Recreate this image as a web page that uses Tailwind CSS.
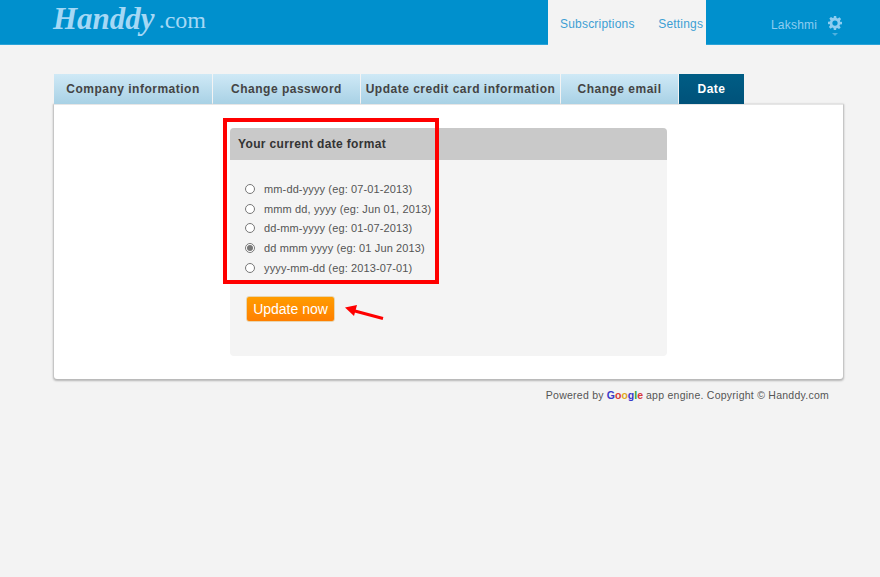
<!DOCTYPE html>
<html lang="en">
<head>
  <meta charset="UTF-8" />
  <title>Handdy - Date format</title>
  <script src="https://cdn.jsdelivr.net/npm/@tailwindcss/browser@4"></script>
</head>
<body class="h-[577px] w-[880px] overflow-hidden bg-[#f3f3f3] font-['Liberation_Sans',Arial,sans-serif] text-[#444]">

  <!-- top bar -->
  <header class="flex h-[45px] border-b border-[#2ba3d8] bg-[#0090cd]">
    <div class="ml-[53px] flex h-[44px] w-[495px] items-start pt-[1px] text-[#a5d8f5]">
      <span class="font-['Liberation_Serif',serif] text-[31px] leading-[36px] font-bold italic">Handdy</span>
      <span class="ml-[4px] font-['Liberation_Serif',serif] text-[24px] leading-[38px]">.com</span>
    </div>
    <div class="-mb-px w-[158px] bg-[#f3f3f3] pt-[17px] text-[12px] leading-[14px] tracking-[0.2px] text-[#3d9fd4]">
      <a class="ml-[12px]">Subscriptions</a>
      <a class="ml-[20px]">Settings</a>
    </div>
    <div class="relative flex-1 pt-[18px] text-[12px] leading-[14px] tracking-[0.2px] text-[#8fcdf0]">
      <span class="ml-[65px]">Lakshmi</span>
      <svg class="absolute top-[16px] left-[122px]" width="14" height="14" viewBox="0 0 24 24" fill="#8fcdf0">
        <path fill-rule="evenodd" d="M10 0h4l.6 3.4 2.1.9 2.9-2 2.8 2.8-2 2.9.9 2.1L24 10v4l-3.4.6-.9 2.1 2 2.9-2.8 2.8-2.9-2-2.1.9L14 24h-4l-.6-3.4-2.1-.9-2.9 2-2.8-2.8 2-2.9-.9-2.1L0 14v-4l3.4-.6.9-2.1-2-2.9 2.8-2.8 2.9 2 2.1-.9zM12 7.500a4.500 4.500 0 1 0 0 9 4.500 4.500 0 0 0 0-9z" />
      </svg>
      <svg class="absolute top-[33px] left-[126px]" width="6" height="3" viewBox="0 0 6 3" fill="#4fb0de"><path d="M0 0h6L3 3z" /></svg>
    </div>
  </header>

  <main class="relative ml-[54px] mt-[29px] w-[789px]">
    <!-- tabs -->
    <nav class="flex h-[30px] gap-px text-[12px] leading-[30px] font-bold tracking-[0.5px] text-[#444]">
      <a class="w-[158px] bg-gradient-to-b from-[#cfe9f6] to-[#a8d1e5] text-center">Company information</a>
      <a class="w-[147px] bg-gradient-to-b from-[#cfe9f6] to-[#a8d1e5] text-center">Change password</a>
      <a class="w-[199px] bg-gradient-to-b from-[#cfe9f6] to-[#a8d1e5] text-center">Update credit card information</a>
      <a class="w-[117px] bg-gradient-to-b from-[#cfe9f6] to-[#a8d1e5] text-center">Change email</a>
      <a class="w-[65px] bg-gradient-to-b from-[#005d85] to-[#00527a] text-center text-white">Date</a>
    </nav>

    <!-- card -->
    <section class="h-[275px] rounded-b-[3px] border-t border-[#e6e6e6] bg-white pt-[23px] pl-[176px] shadow-[0_1px_2px_1px_rgba(0,0,0,0.25)]">
      <div class="h-[228px] w-[437px] rounded-[4px] bg-[#f4f4f4]">
        <h2 class="h-[32px] rounded-t-[4px] bg-[#c9c9c9] pl-[8px] text-[12px] leading-[33px] font-bold tracking-[0.35px] text-[#333]">Your current date format</h2>
        <div class="flex flex-col gap-[5.7px] pt-[22px] pl-[15px] text-[11px] leading-[14px] tracking-[0.13px] text-[#555]">
          <label class="flex items-center"><input type="radio" name="fmt" class="mr-[9px] h-[10px] w-[10px] accent-[#777]" />mm-dd-yyyy (eg: 07-01-2013)</label>
          <label class="flex items-center"><input type="radio" name="fmt" class="mr-[9px] h-[10px] w-[10px] accent-[#777]" />mmm dd, yyyy (eg: Jun 01, 2013)</label>
          <label class="flex items-center"><input type="radio" name="fmt" class="mr-[9px] h-[10px] w-[10px] accent-[#777]" />dd-mm-yyyy (eg: 01-07-2013)</label>
          <label class="flex items-center"><input type="radio" name="fmt" checked class="mr-[9px] h-[10px] w-[10px] accent-[#777]" />dd mmm yyyy (eg: 01 Jun 2013)</label>
          <label class="flex items-center"><input type="radio" name="fmt" class="mr-[9px] h-[10px] w-[10px] accent-[#777]" />yyyy-mm-dd (eg: 2013-07-01)</label>
        </div>
        <button class="mt-[21px] ml-[16px] h-[26px] w-[89px] rounded-[3px] border border-[#e8d5b0] bg-gradient-to-b from-[#ff9c00] to-[#ff7f00] text-[14px] leading-[24px] font-normal text-white">Update now</button>
      </div>
    </section>

    <footer class="mt-[9px] flex justify-end pr-[14px] text-[10.5px] leading-[14px] tracking-[0.25px] text-[#555]">
      Powered by
      <span class="mx-[3px] font-bold tracking-normal"><span class="text-[#3a3ac8]">G</span><span class="text-[#d8383a]">o</span><span class="text-[#e0a81e]">o</span><span class="text-[#3a3ac8]">g</span><span class="text-[#2f9e3a]">l</span><span class="text-[#d8383a]">e</span></span>
      app engine. Copyright © Handdy.com
    </footer>

    <!-- annotations -->
    <div class="absolute top-[44px] left-[169px] h-[166px] w-[216px] border-[4px] border-[#ff0000]"></div>
    <svg class="absolute top-[229px] left-[290px]" width="42" height="20" viewBox="0 0 42 20">
      <path d="M39 15.500 9 7.500" stroke="#f00" stroke-width="3" />
      <path d="M1 4.500 13 2 10 13z" fill="#f00" />
    </svg>
  </main>
</body>
</html>
